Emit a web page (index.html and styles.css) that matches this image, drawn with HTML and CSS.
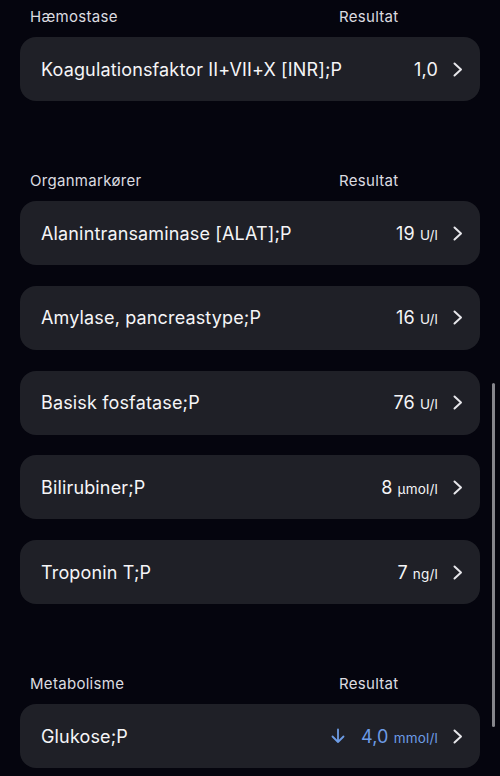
FILE: index.html
```html
<!DOCTYPE html>
<html lang="da">
<head>
    <meta charset="UTF-8">
    <meta name="viewport" content="width=device-width, initial-scale=1.0">
    <title>Prøvesvar</title>
    <link rel="stylesheet" href="styles.css">
</head>
<body>
    <div class="results">
        <section class="group">
            <div class="group-header">
                <span class="col-label">Hæmostase</span>
                <span class="col-result">Resultat</span>
            </div>
            <a class="row" href="#">
                <span class="row-name">Koagulationsfaktor II+VII+X [INR];P</span>
                <span class="row-value">1,0</span>
                <svg class="chevron" width="10" height="15" viewBox="0 0 10 15"><polyline points="1.5,1.5 8,7.5 1.5,13.5" /></svg>
            </a>
        </section>

        <section class="group">
            <div class="group-header">
                <span class="col-label">Organmarkører</span>
                <span class="col-result">Resultat</span>
            </div>
            <a class="row" href="#">
                <span class="row-name">Alanintransaminase [ALAT];P</span>
                <span class="row-value">19 <small class="unit">U/l</small></span>
                <svg class="chevron" width="10" height="15" viewBox="0 0 10 15"><polyline points="1.5,1.5 8,7.5 1.5,13.5" /></svg>
            </a>
            <a class="row" href="#">
                <span class="row-name">Amylase, pancreastype;P</span>
                <span class="row-value">16 <small class="unit">U/l</small></span>
                <svg class="chevron" width="10" height="15" viewBox="0 0 10 15"><polyline points="1.5,1.5 8,7.5 1.5,13.5" /></svg>
            </a>
            <a class="row" href="#">
                <span class="row-name">Basisk fosfatase;P</span>
                <span class="row-value">76 <small class="unit">U/l</small></span>
                <svg class="chevron" width="10" height="15" viewBox="0 0 10 15"><polyline points="1.5,1.5 8,7.5 1.5,13.5" /></svg>
            </a>
            <a class="row" href="#">
                <span class="row-name">Bilirubiner;P</span>
                <span class="row-value">8 <small class="unit">μmol/l</small></span>
                <svg class="chevron" width="10" height="15" viewBox="0 0 10 15"><polyline points="1.5,1.5 8,7.5 1.5,13.5" /></svg>
            </a>
            <a class="row" href="#">
                <span class="row-name">Troponin T;P</span>
                <span class="row-value">7 <small class="unit">ng/l</small></span>
                <svg class="chevron" width="10" height="15" viewBox="0 0 10 15"><polyline points="1.5,1.5 8,7.5 1.5,13.5" /></svg>
            </a>
        </section>

        <section class="group">
            <div class="group-header">
                <span class="col-label">Metabolisme</span>
                <span class="col-result">Resultat</span>
            </div>
            <a class="row" href="#">
                <span class="row-name">Glukose;P</span>
                <span class="row-value low">
                    <svg class="arrow" width="14" height="16" viewBox="0 0 14 16"><path d="M7 1.5 V14 M1.5 8.5 L7 14 L12.5 8.5" /></svg>
                    4,0 <small class="unit">mmol/l</small>
                </span>
                <svg class="chevron" width="10" height="15" viewBox="0 0 10 15"><polyline points="1.5,1.5 8,7.5 1.5,13.5" /></svg>
            </a>
        </section>
    </div>

    <div class="scrollbar"></div>
</body>
</html>
```

FILE: styles.css
```css
body {
    margin: 0;
    background-color: #05050e;
    color: #f2f2f5;
    font-family: Inter, "Noto Sans", sans-serif;
    -webkit-font-smoothing: antialiased;
}
.results {
    padding: 7px 20px 0;
}
.group {
    display: flex;
    flex-direction: column;
    gap: 20.75px;
    margin-bottom: 70px;
}
.group-header {
    display: flex;
    height: 20px;
    line-height: 20px;
    padding-left: 10px;
    margin-bottom: -10.75px;
    font-size: 15px;
    letter-spacing: 0.3px;
    color: #dcdce0;
}
.col-label {
    flex: 1;
}
.col-result {
    width: 141px;
}
.row {
    display: flex;
    align-items: center;
    height: 64px;
    padding: 0 17px 0 21px;
    background-color: #1f2027;
    border-radius: 16px;
    color: #f5f5f7;
    text-decoration: none;
    font-size: 18px;
}
.row-name {
    flex: 1;
    letter-spacing: 0.15px;
}
.row-value {
    display: flex;
    align-items: baseline;
    gap: 5px;
    letter-spacing: 0.2px;
}
.unit {
    font-size: 13.5px;
}
.low {
    color: #6d9ce6;
    align-items: center;
}
.low .unit {
    margin-top: 3px;
}
.arrow {
    fill: none;
    stroke: #6d9ce6;
    stroke-width: 1.8;
    stroke-linecap: round;
    stroke-linejoin: round;
    margin-right: 11px;
}
.chevron {
    margin-left: 15px;
    fill: none;
    stroke: #e6e6ea;
    stroke-width: 2;
    stroke-linecap: round;
    stroke-linejoin: round;
}
.scrollbar {
    position: absolute;
    top: 383px;
    left: 492px;
    width: 3px;
    height: 344px;
    border-radius: 2px;
    background-color: #86868c;
}
```
